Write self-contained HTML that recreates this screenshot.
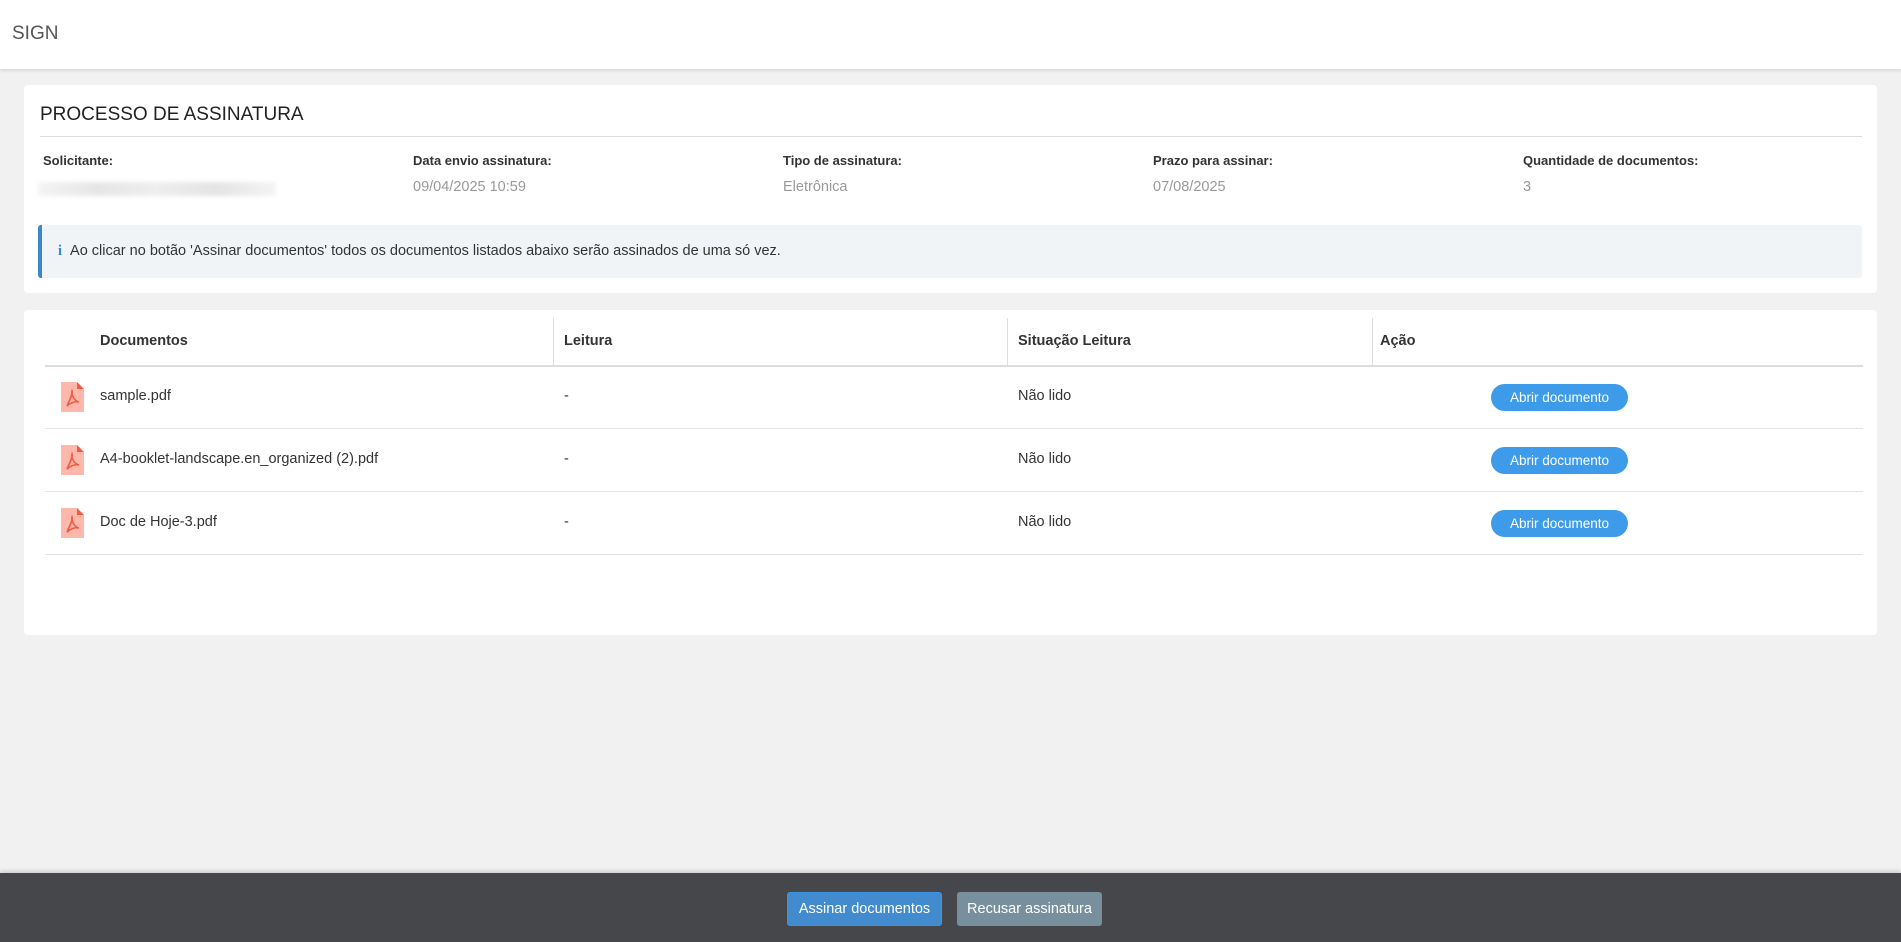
<!DOCTYPE html>
<html><head><meta charset="utf-8"><style>
*{box-sizing:border-box;margin:0;padding:0}
body{width:1901px;height:942px;background:#f1f1f1;font-family:"Liberation Sans",sans-serif;color:#333;position:relative;overflow:hidden;font-size:14.5px}
.hdr{position:absolute;left:0;top:0;width:1901px;height:69px;background:#fff;box-shadow:0 1px 4px rgba(0,0,0,.15)}
.hdr span{position:absolute;left:12px;top:23px;font-size:19px;color:#555}
.card{position:absolute;left:24px;width:1853px;background:#fff;border-radius:4px}
.abs{position:absolute}
.lbl{font-weight:bold;font-size:13px;color:#333}
.val{color:#999;font-size:14.5px}
.th{position:absolute;top:333px;font-weight:bold;font-size:14.5px}
.line{position:absolute;left:45px;width:1818px;height:1px;background:#e2e2e2}
.vs{position:absolute;top:318px;height:48px;width:1px;background:#ddd}
.btn{position:absolute;left:1491px;width:137px;height:27px;border-radius:14px;background:#3d9be9;color:#fff;font-size:13.5px;text-align:center;line-height:27px}
.pdf{position:absolute;left:61px;width:23px;height:30px}
</style></head><body>
<div class="hdr"><span>SIGN</span></div>
<div class="card" style="top:85px;height:208px"></div>
<div class="abs" style="left:40px;top:104px;font-size:19px;color:#222">PROCESSO DE ASSINATURA</div>
<div class="abs" style="left:40px;top:136px;width:1822px;height:1px;background:#ddd"></div>
<div class="abs lbl" style="left:43px;top:153px">Solicitante:</div>
<div class="abs" style="left:38px;top:182px;width:238px;height:14px;background:linear-gradient(90deg,#f4f4f4,#e6e6e6,#eee,#e4e4e4,#f4f4f4);filter:blur(2px)"></div>
<div class="abs lbl" style="left:413px;top:153px">Data envio assinatura:</div>
<div class="abs val" style="left:413px;top:179px">09/04/2025 10:59</div>
<div class="abs lbl" style="left:783px;top:153px">Tipo de assinatura:</div>
<div class="abs val" style="left:783px;top:179px">Eletrônica</div>
<div class="abs lbl" style="left:1153px;top:153px">Prazo para assinar:</div>
<div class="abs val" style="left:1153px;top:179px">07/08/2025</div>
<div class="abs lbl" style="left:1523px;top:153px">Quantidade de documentos:</div>
<div class="abs val" style="left:1523px;top:179px">3</div>
<div class="abs" style="left:38px;top:225px;width:1824px;height:53px;background:#f0f4f7;border-left:4px solid #3d87c8;border-radius:3px"></div>
<div class="abs" style="left:58px;top:243px;font-size:14.5px;color:#333"><span style="color:#3d87c8;font-weight:bold;font-family:'Liberation Serif',serif;margin-right:8px">i</span>Ao clicar no botão 'Assinar documentos' todos os documentos listados abaixo serão assinados de uma só vez.</div>

<div class="card" style="top:310px;height:325px"></div>
<div class="th" style="left:100px">Documentos</div>
<div class="th" style="left:564px">Leitura</div>
<div class="th" style="left:1018px">Situação Leitura</div>
<div class="th" style="left:1380px">Ação</div>
<div class="vs" style="left:553px"></div><div class="vs" style="left:1007px"></div><div class="vs" style="left:1372px"></div>
<div class="line" style="top:365px;height:2px;background:#ddd"></div>
<div class="line" style="top:428px"></div>
<div class="line" style="top:491px"></div>
<div class="line" style="top:554px"></div>

<svg class="pdf" style="top:382px" viewBox="0 0 23 30"><path d="M0 0H16L23 7V30H0Z" fill="#fdb8ab"/><path d="M16 0L23 7H16Z" fill="#f25a45"/><path d="M6 24C9 17 12 12 11 9C10 12 13 19 18 20C14 19 9 21 6 24Z" fill="none" stroke="#f25a45" stroke-width="1.6"/></svg>
<div class="abs" style="left:100px;top:388px">sample.pdf</div>
<div class="abs" style="left:564px;top:388px">-</div>
<div class="abs" style="left:1018px;top:388px">Não lido</div>
<div class="btn" style="top:384px">Abrir documento</div>

<svg class="pdf" style="top:445px" viewBox="0 0 23 30"><path d="M0 0H16L23 7V30H0Z" fill="#fdb8ab"/><path d="M16 0L23 7H16Z" fill="#f25a45"/><path d="M6 24C9 17 12 12 11 9C10 12 13 19 18 20C14 19 9 21 6 24Z" fill="none" stroke="#f25a45" stroke-width="1.6"/></svg>
<div class="abs" style="left:100px;top:451px">A4-booklet-landscape.en_organized (2).pdf</div>
<div class="abs" style="left:564px;top:451px">-</div>
<div class="abs" style="left:1018px;top:451px">Não lido</div>
<div class="btn" style="top:447px">Abrir documento</div>

<svg class="pdf" style="top:508px" viewBox="0 0 23 30"><path d="M0 0H16L23 7V30H0Z" fill="#fdb8ab"/><path d="M16 0L23 7H16Z" fill="#f25a45"/><path d="M6 24C9 17 12 12 11 9C10 12 13 19 18 20C14 19 9 21 6 24Z" fill="none" stroke="#f25a45" stroke-width="1.6"/></svg>
<div class="abs" style="left:100px;top:514px">Doc de Hoje-3.pdf</div>
<div class="abs" style="left:564px;top:514px">-</div>
<div class="abs" style="left:1018px;top:514px">Não lido</div>
<div class="btn" style="top:510px">Abrir documento</div>

<div class="abs" style="left:0;top:873px;width:1901px;height:69px;background:#45474b;box-shadow:0 -2px 4px rgba(0,0,0,.15)"></div>
<div class="abs" style="left:787px;top:892px;width:155px;height:34px;background:#428bcf;border:1px solid #3a95e6;border-radius:3px;color:#fff;text-align:center;line-height:32px;font-size:14.5px">Assinar documentos</div>
<div class="abs" style="left:957px;top:892px;width:145px;height:34px;background:#788f9e;border-radius:3px;color:#fff;text-align:center;line-height:34px;font-size:14.5px">Recusar assinatura</div>
</body></html>
